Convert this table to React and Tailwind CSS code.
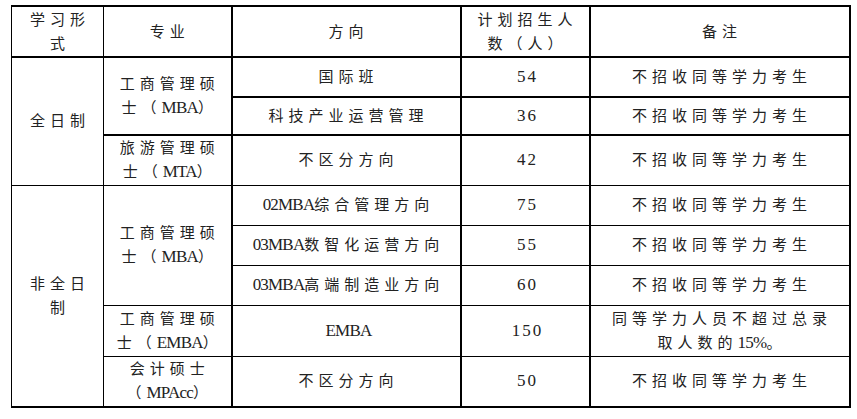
import React from 'react'

const font = { fontFamily: '"Liberation Serif", "Noto Sans CJK SC", serif' }

function L({ children }) {
  // latin run inside CJK text (SimSun-like narrow latin)
  return <span className="text-[17px] tracking-[-0.8px]">{children}</span>
}

function N({ children }) {
  return <span className="text-[17px] tracking-[2px]">{children}</span>
}

const td = 'border border-black text-center align-middle p-0 pl-[5px] whitespace-nowrap'

export default function App() {
  return (
    <div className="min-h-screen bg-white pl-[11px] pt-[5px] text-[15px] leading-[24px] tracking-[5px] text-[#222]" style={font}>
      <table className="border-collapse table-fixed w-[838px]">
        <colgroup>
          <col className="w-[92px]" />
          <col className="w-[128px]" />
          <col className="w-[229px]" />
          <col className="w-[129px]" />
          <col className="w-[260px]" />
        </colgroup>
        <tbody>
          <tr className="h-[51px]">
            <td className={`${td} border-t-2 border-b-2`}>学习形<br />式</td>
            <td className={`${td} border-t-2 border-b-2`}>专业</td>
            <td className={`${td} border-t-2 border-b-2 border-l-2`}>方向</td>
            <td className={`${td} border-t-2 border-b-2 border-l-2`}>计划招生人<br />数（人）</td>
            <td className={`${td} border-t-2 border-b-2 border-l-2 border-r-2`}>备注</td>
          </tr>
          <tr className="h-[40px]">
            <td className={td} rowSpan={3}>全日制</td>
            <td className={td} rowSpan={2}>工商管理硕<br />士（<L>MBA</L>）</td>
            <td className={`${td} border-l-2 border-b-2`}>国际班</td>
            <td className={`${td} border-l-2 border-b-2`}><N>54</N></td>
            <td className={`${td} border-l-2 border-r-2 border-b-2`}>不招收同等学力考生</td>
          </tr>
          <tr className="h-[38px]">
            <td className={`${td} border-l-2`}>科技产业运营管理</td>
            <td className={`${td} border-l-2`}><N>36</N></td>
            <td className={`${td} border-l-2 border-r-2`}>不招收同等学力考生</td>
          </tr>
          <tr className="h-[50px]">
            <td className={`${td} border-t-2`}>旅游管理硕<br />士（<L>MTA</L>）</td>
            <td className={`${td} border-t-2 border-l-2`}>不区分方向</td>
            <td className={`${td} border-t-2 border-l-2`}><N>42</N></td>
            <td className={`${td} border-t-2 border-l-2 border-r-2`}>不招收同等学力考生</td>
          </tr>
          <tr className="h-[40px]">
            <td className={`${td} border-b-2`} rowSpan={5}>非全日<br />制</td>
            <td className={td} rowSpan={3}>工商管理硕<br />士（<L>MBA</L>）</td>
            <td className={`${td} border-l-2`}><L>02MBA</L>综合管理方向</td>
            <td className={`${td} border-l-2`}><N>75</N></td>
            <td className={`${td} border-l-2 border-r-2`}>不招收同等学力考生</td>
          </tr>
          <tr className="h-[40px]">
            <td className={`${td} border-l-2`}><L>03MBA</L>数智化运营方向</td>
            <td className={`${td} border-l-2`}><N>55</N></td>
            <td className={`${td} border-l-2 border-r-2`}>不招收同等学力考生</td>
          </tr>
          <tr className="h-[40px]">
            <td className={`${td} border-l-2`}><L>03MBA</L>高端制造业方向</td>
            <td className={`${td} border-l-2`}><N>60</N></td>
            <td className={`${td} border-l-2 border-r-2`}>不招收同等学力考生</td>
          </tr>
          <tr className="h-[51px]">
            <td className={td}>工商管理硕<br />士（<L>EMBA</L>）</td>
            <td className={`${td} border-l-2`}><L>EMBA</L></td>
            <td className={`${td} border-l-2`}><N>150</N></td>
            <td className={`${td} border-l-2 border-r-2`}>同等学力人员不超过总录<br />取人数的<L>15%</L>。</td>
          </tr>
          <tr className="h-[51px]">
            <td className={`${td} border-b-2`}>会计硕士<br />（<L>MPAcc</L>）</td>
            <td className={`${td} border-l-2 border-b-2`}>不区分方向</td>
            <td className={`${td} border-l-2 border-b-2`}><N>50</N></td>
            <td className={`${td} border-l-2 border-r-2 border-b-2`}>不招收同等学力考生</td>
          </tr>
        </tbody>
      </table>
    </div>
  )
}
